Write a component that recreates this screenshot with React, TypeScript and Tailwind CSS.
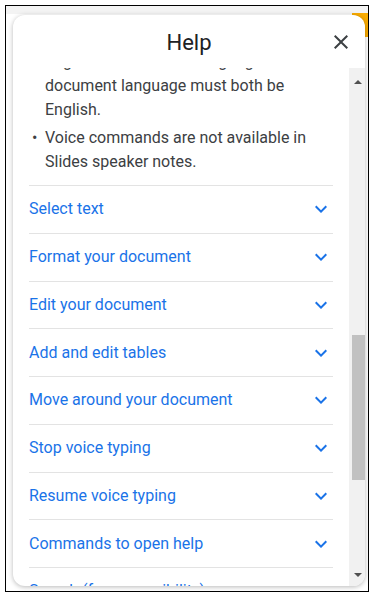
const topics = [
  "Select text",
  "Format your document",
  "Edit your document",
  "Add and edit tables",
  "Move around your document",
  "Stop voice typing",
  "Resume voice typing",
  "Commands to open help",
  "Search (for accessibility)",
];

function ExpandMore() {
  return (
    <svg width="24" height="24" viewBox="0 0 24 24" className="shrink-0">
      <path d="M16.59 8.59L12 13.17 7.41 8.59 6 10l6 6 6-6z" fill="#1a73e8" />
    </svg>
  );
}

function CloseIcon() {
  return (
    <svg width="24" height="24" viewBox="0 0 24 24">
      <path
        d="M19 6.41L17.59 5 12 10.59 6.41 5 5 6.41 10.59 12 5 17.59 6.41 19 12 13.41 17.59 19 19 17.59 13.41 12z"
        fill="#3c4043"
      />
    </svg>
  );
}

function Bullet({ lines, className = "" }: { lines: string[]; className?: string }) {
  return (
    <li className={`flex ${className}`}>
      <span className="w-[16px] shrink-0 pl-[3px]">•</span>
      <span className="flex flex-col">
        {lines.map((l) => (
          <span key={l} className="block whitespace-nowrap">
            {l}
          </span>
        ))}
      </span>
    </li>
  );
}

function Scrollbar() {
  return (
    <div className="w-[16px] shrink-0 bg-[#f1f1f1] flex flex-col items-end">
      <div className="h-[18px] w-[15px] flex items-end justify-center pb-[2px]">
        <div className="w-0 h-0 border-x-[4px] border-x-transparent border-b-[4px] border-b-[#505050]" />
      </div>
      <div className="h-[249px]" />
      <div className="h-[145px] w-[13px] bg-[#c1c1c1]" />
      <div className="flex-1" />
      <div className="h-[15px] w-[15px] flex items-center justify-center mb-[4px]">
        <div className="w-0 h-0 border-x-[4px] border-x-transparent border-t-[4px] border-t-[#505050]" />
      </div>
    </div>
  );
}

export default function App() {
  return (
    <div className="w-[375px] h-[597px] bg-white p-[5px] font-['Roboto',sans-serif]">
      <div className="relative w-[364px] h-[587px] border border-black bg-white pl-[7px] pt-[9px] overflow-hidden">
        <div className="absolute top-0 left-0 right-0 h-[8px] bg-[#f3f3f3]" />
        <div className="absolute top-[7px] right-0 w-[16px] h-[24px] bg-[#f9ab00]" />
        <div className="relative flex flex-col w-[352px] h-[571px] bg-white rounded-[12px] overflow-hidden shadow-[0_1px_5px_rgba(0,0,0,0.28)]">
          <div className="h-[53px] shrink-0 flex items-center">
            <div className="w-[48px]" />
            <h1 className="flex-1 text-center text-[22px] leading-[28px] pt-[2px] text-[#202124]">Help</h1>
            <div className="w-[48px] flex justify-center">
              <CloseIcon />
            </div>
          </div>
          <div className="flex flex-1 min-h-0">
            <div className="flex-1 overflow-hidden px-4">
              <ul className="-mt-[18px] text-[16px] leading-[24px] text-[#3c4043] mb-[11px]">
                <Bullet
                  lines={[
                    "English. The account language and",
                    "document language must both be",
                    "English.",
                  ]}
                />
                <Bullet
                  className="mt-[4px]"
                  lines={["Voice commands are not available in", "Slides speaker notes."]}
                />
              </ul>
              {topics.map((t) => (
                <div
                  key={t}
                  className="h-[47.75px] border-t border-[#e3e3e3] flex items-center justify-between text-[16px] text-[#1a73e8]"
                >
                  <span>{t}</span>
                  <ExpandMore />
                </div>
              ))}
            </div>
            <Scrollbar />
          </div>
        </div>
      </div>
    </div>
  );
}
